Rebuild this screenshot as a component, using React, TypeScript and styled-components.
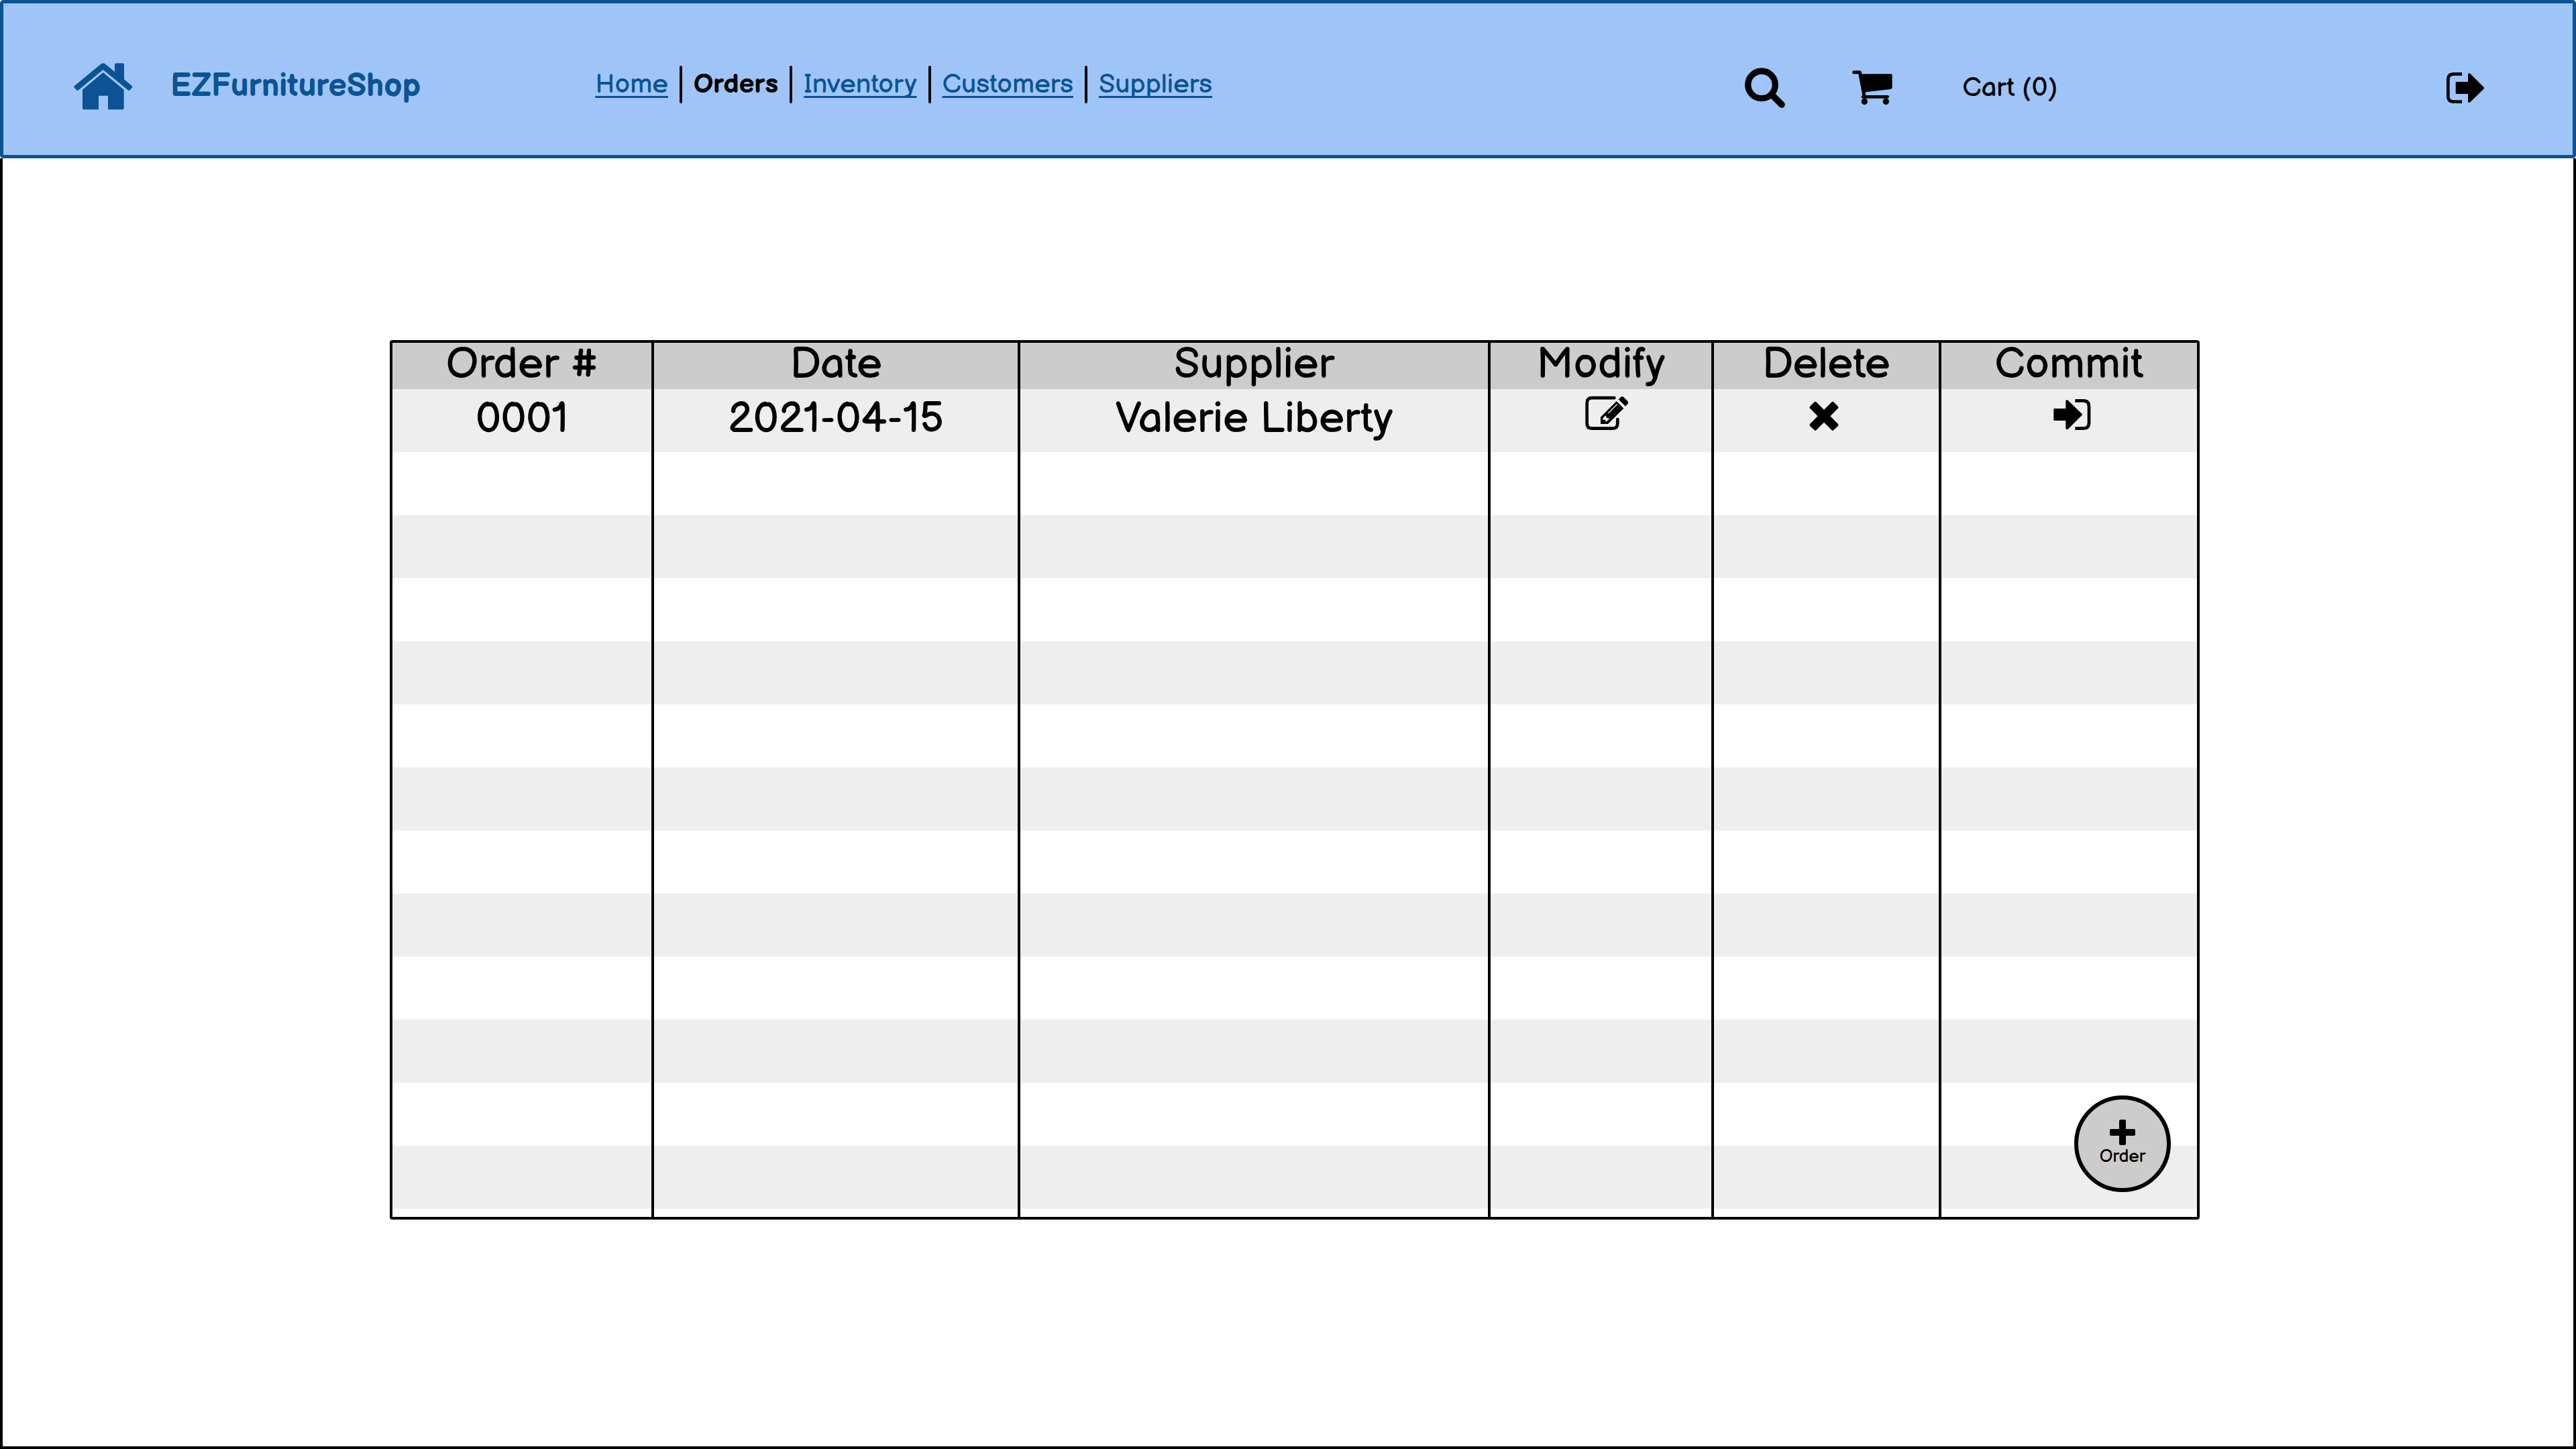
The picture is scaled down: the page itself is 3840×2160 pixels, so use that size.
import React from "react";
import styled, { createGlobalStyle } from "styled-components";

const color = {
  ink: "#000000",
  blue: "#0b5394",
  sky: "#9fc5f8",
  head: "#cccccc",
  stripe: "#eeeeee",
};

const GlobalStyle = createGlobalStyle`
  *, *::before, *::after { box-sizing: border-box; }
  body {
    margin: 0;
    background: #ffffff;
    color: ${color.ink};
    font-family: "Balsamiq Sans", Lato, "Open Sans", sans-serif;
    font-weight: 400;
  }
  svg { display: block; flex: none; }
`;

const Page = styled.div`
  display: flex;
  flex-direction: column;
  min-height: 100vh;
`;

const Header = styled.header`
  display: flex;
  align-items: center;
  min-height: 236px;
  padding: 22px 132px 0 105px;
  border: 5px solid ${color.blue};
  border-radius: 5px;
  background: ${color.sky};
`;

const Brand = styled.a`
  display: flex;
  align-items: center;
  gap: 56px;
  color: ${color.blue};
  font-size: 48px;
  font-weight: 700;
  line-height: 60px;
  text-decoration: none;
`;

const Nav = styled.nav`
  margin-left: 260px;
  padding-bottom: 6px;
`;

const NavList = styled.ul`
  display: flex;
  align-items: center;
  margin: 0;
  padding: 0;
  list-style: none;
`;

const NavItem = styled.li`
  display: flex;
  align-items: center;
  font-size: 40px;
  line-height: 56px;

  & + &::before {
    content: "";
    width: 4px;
    height: 56px;
    margin: 0 17px;
    border-radius: 2px;
    background: ${color.ink};
  }
`;

const NavLink = styled.a<{ $active?: boolean }>`
  color: ${(p) => (p.$active ? color.ink : color.blue)};
  font-weight: ${(p) => (p.$active ? 700 : 400)};
  text-decoration: ${(p) => (p.$active ? "none" : "underline")};
  text-decoration-thickness: 3px;
  text-underline-offset: 5px;
  text-decoration-skip-ink: none;
`;

const Tools = styled.div`
  display: flex;
  align-items: center;
  gap: 100px;
  margin-left: auto;
  padding-top: 4px;
`;

const IconButton = styled.button`
  display: flex;
  align-items: center;
  justify-content: center;
  padding: 0;
  border: 0;
  background: none;
  color: inherit;
  font: inherit;
  cursor: pointer;
`;

const CartButton = styled(IconButton)`
  gap: 104px;
  font-size: 40px;
  line-height: 56px;
`;

const LogoutButton = styled(IconButton)`
  margin-left: 480px;
`;

const Main = styled.main`
  flex: 1;
  padding: 271px 557px 120px 577px;
  border: 4px solid ${color.ink};
  border-top: 0;
`;

const TableFrame = styled.section`
  position: relative;
  border: 4px solid ${color.ink};
  border-radius: 4px;
`;

const Table = styled.table`
  width: 100%;
  table-layout: fixed;
  border-collapse: separate;
  border-spacing: 0;
  font-size: 64px;
  text-align: center;
`;

const Col = styled.col<{ $width: number }>`
  width: ${(p) => p.$width}px;
`;

const HeadCell = styled.th`
  height: 69px;
  padding: 0;
  background: ${color.head};
  font-weight: 400;
  line-height: 66px;
  vertical-align: top;

  &:not(:last-child) { border-right: 4px solid ${color.ink}; }
`;

const Cell = styled.td`
  height: 94px;
  padding: 0;
  line-height: 90px;
  vertical-align: top;

  &:not(:last-child) { border-right: 4px solid ${color.ink}; }
`;

const Row = styled.tr`
  &:nth-child(odd) { background: ${color.stripe}; }
`;

const EndRow = styled.tr`
  ${Cell} { height: 12px; line-height: 12px; }
`;

const RowAction = styled(IconButton)`
  width: 100%;
  height: 76px;
`;

const AddButton = styled.button`
  position: absolute;
  right: 39px;
  bottom: 37px;
  display: flex;
  flex-direction: column;
  align-items: center;
  width: 144px;
  height: 144px;
  padding: 30px 0 0;
  border: 6px solid ${color.ink};
  border-radius: 50%;
  background: ${color.head};
  color: ${color.ink};
  font: inherit;
  font-size: 26px;
  line-height: 36px;
  cursor: pointer;
`;

const HomeIcon = () => (
  <svg width="88" height="70" viewBox="29 41 264 210" fill="currentColor" aria-hidden="true">
    <path d="M151 45Q160 39 169 45L212 80V48Q212 42 218 42H248Q254 42 254 48V114L289 143Q293 147 289 151L280 162Q276 166 271 162L160 71L50 162Q45 166 41 162L32 151Q28 147 32 143Z" />
    <path d="M160 83L253 160V241Q253 249 245 249H182V187H140V249H76Q68 249 68 241V160Z" />
  </svg>
);

const SearchIcon = () => (
  <svg width="60" height="60" viewBox="36 31 180 180" fill="none" stroke="currentColor" aria-hidden="true">
    <circle cx="111" cy="107" r="61" strokeWidth="28" />
    <path d="M158 153L201 196" strokeWidth="29" strokeLinecap="round" />
  </svg>
);

const CartIcon = () => (
  <svg width="60" height="52" viewBox="516 44 180 156" fill="currentColor" aria-hidden="true">
    <path d="M524 52.500H550L571 162" fill="none" stroke="currentColor" strokeWidth="15" strokeLinecap="round" strokeLinejoin="round" />
    <path d="M553 60H689Q695 60 695 66V120Q695 127 688 128L577 141H567Z" />
    <rect x="557" y="155" width="124" height="14" rx="7" />
    <circle cx="571" cy="183" r="14" />
    <circle cx="667" cy="183" r="14" />
  </svg>
);

const LogoutIcon = () => (
  <svg width="56" height="46" viewBox="258 327 168 138" fill="currentColor" aria-hidden="true">
    <path d="M327 334H290Q265 334 265 359V433Q265 458 290 458H327" fill="none" stroke="currentColor" strokeWidth="14" />
    <path d="M303 369H354V335Q357 327 364 332L424 392Q428 397 424 401L364 460Q357 465 354 458V423H303Q299 423 299 419V373Q299 369 303 369Z" />
  </svg>
);

const EditIcon = () => (
  <svg width="88" height="56" viewBox="8 30 264 168" fill="currentColor" aria-hidden="true">
    <path d="M201 39.500H101Q79 39.500 79 62V154Q79 176 101 176H194Q216 176 216 154V135" fill="none" stroke="currentColor" strokeWidth="14" strokeLinecap="round" />
    <path d="M140 125L211 54L243 86L173 156H140Z" />
    <path d="M220 46L231 35Q236 31 242 35L261 54Q266 60 262 65L251 77Z" />
    <path d="M175 107L213 69" stroke={color.stripe} strokeWidth="4" strokeLinecap="round" />
    <path d="M150 130L163 118L167 128L180 132L167 145H162V137H150Z" fill={color.stripe} />
  </svg>
);

const DeleteIcon = () => (
  <svg width="88" height="56" viewBox="0 0 264 168" fill="currentColor" aria-hidden="true">
    <g transform="translate(123 91) rotate(45)">
      <rect x="-75" y="-20" width="150" height="40" rx="7" />
      <rect x="-20" y="-75" width="40" height="150" rx="7" />
    </g>
  </svg>
);

const CommitIcon = () => (
  <svg width="88" height="56" viewBox="2 30 264 168" fill="currentColor" aria-hidden="true">
    <path d="M162 52H199Q224 52 224 77V151Q224 176 199 176H162" fill="none" stroke="currentColor" strokeWidth="14" />
    <path d="M70 87H120V53Q123 45 130 50L192 110Q196 114 192 118L130 179Q123 183 120 176V141H70Q66 141 66 137V91Q66 87 70 87Z" />
  </svg>
);

const PlusIcon = () => (
  <svg width="38" height="38" viewBox="0 0 38 38" fill="currentColor" aria-hidden="true">
    <rect x="14" y="0" width="10" height="38" rx="2" />
    <rect x="0" y="14" width="38" height="10" rx="2" />
  </svg>
);

const links = ["Home", "Orders", "Inventory", "Customers", "Suppliers"];

const columns = [
  { title: "Order #", width: 390 },
  { title: "Date", width: 546 },
  { title: "Supplier", width: 700 },
  { title: "Modify", width: 333 },
  { title: "Delete", width: 339 },
  { title: "Commit", width: 381 },
];

const orders = [{ id: "0001", date: "2021-04-15", supplier: "Valerie Liberty" }];
const emptyRows = Array.from({ length: 12 }, (_, i) => i);

export default function App() {
  return (
    <Page>
      <GlobalStyle />
      <Header>
        <Brand href="#home">
          <HomeIcon />
          EZFurnitureShop
        </Brand>
        <Nav>
          <NavList>
            {links.map((name) => (
              <NavItem key={name}>
                <NavLink
                  href={`#${name.toLowerCase()}`}
                  $active={name === "Orders"}
                  aria-current={name === "Orders" ? "page" : undefined}
                >
                  {name}
                </NavLink>
              </NavItem>
            ))}
          </NavList>
        </Nav>
        <Tools>
          <IconButton type="button" aria-label="Search">
            <SearchIcon />
          </IconButton>
          <CartButton type="button">
            <CartIcon />
            Cart (0)
          </CartButton>
          <LogoutButton type="button" aria-label="Log out">
            <LogoutIcon />
          </LogoutButton>
        </Tools>
      </Header>
      <Main>
        <TableFrame>
          <Table>
            <colgroup>
              {columns.map((c) => (
                <Col key={c.title} $width={c.width} />
              ))}
            </colgroup>
            <thead>
              <tr>
                {columns.map((c) => (
                  <HeadCell key={c.title} scope="col">
                    {c.title}
                  </HeadCell>
                ))}
              </tr>
            </thead>
            <tbody>
              {orders.map((o) => (
                <Row key={o.id}>
                  <Cell>{o.id}</Cell>
                  <Cell>{o.date}</Cell>
                  <Cell>{o.supplier}</Cell>
                  <Cell>
                    <RowAction type="button" aria-label="Modify order">
                      <EditIcon />
                    </RowAction>
                  </Cell>
                  <Cell>
                    <RowAction type="button" aria-label="Delete order">
                      <DeleteIcon />
                    </RowAction>
                  </Cell>
                  <Cell>
                    <RowAction type="button" aria-label="Commit order">
                      <CommitIcon />
                    </RowAction>
                  </Cell>
                </Row>
              ))}
              {emptyRows.map((r) => (
                <Row key={r}>
                  {columns.map((c) => (
                    <Cell key={c.title} />
                  ))}
                </Row>
              ))}
            </tbody>
            <tfoot>
              <EndRow>
                {columns.map((c) => (
                  <Cell key={c.title} />
                ))}
              </EndRow>
            </tfoot>
          </Table>
          <AddButton type="button">
            <PlusIcon />
            Order
          </AddButton>
        </TableFrame>
      </Main>
    </Page>
  );
}
